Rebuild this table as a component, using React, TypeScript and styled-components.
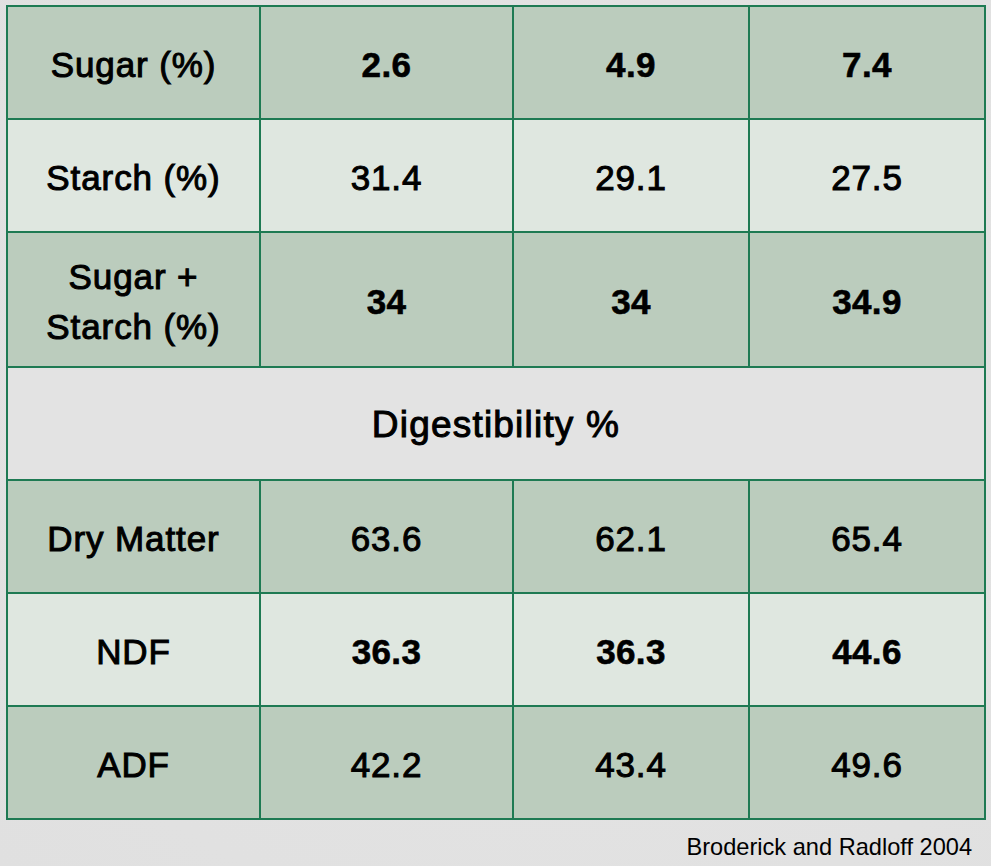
import React from 'react'
import styled, { createGlobalStyle } from 'styled-components'

const GlobalStyle = createGlobalStyle`
    html, body {
        margin: 0;
        padding: 0;
    }

    body {
        background: radial-gradient(ellipse at 55% 45%, #e6e6e6 0%, #e2e2e2 60%, #e0e0e0 100%);
        font-family: 'Liberation Sans', Arial, Helvetica, sans-serif;
        color: #000;
        width: 991px;
        height: 866px;
        overflow: hidden;
    }
`

const Page = styled.div`
    display: flex;
    flex-direction: column;
    padding: 5px 0 0 6px;
`

const Table = styled.div`
    display: grid;
    grid-template-columns: 251px 251px 234px 234px;
    grid-template-rows: 111px 111px 133px 111px 111px 111px 111px;
    gap: 2px;
    padding: 2px;
    width: fit-content;
    background-color: #1e7a53;
`

const Cell = styled.div<{ $shade: 'dark' | 'light'; $bold?: boolean }>`
    display: flex;
    align-items: center;
    justify-content: center;
    text-align: center;
    padding-top: 4px;
    box-sizing: border-box;

    background-color: ${(p) => (p.$shade === 'dark' ? '#bbccbd' : '#dfe7e0')};
    font-size: 35px;
    line-height: 50px;
    font-weight: ${(p) => (p.$bold ? 700 : 400)};
    letter-spacing: ${(p) => (p.$bold ? '0.4px' : '0.9px')};
    -webkit-text-stroke: ${(p) => (p.$bold ? '0.6px #000' : '1px #000')};
`

const SectionCell = styled.div`
    grid-column: 1 / -1;
    display: flex;
    align-items: center;
    justify-content: center;
    padding-top: 2px;

    background-color: #e3e3e3;
    font-size: 37px;
    font-weight: 400;
    letter-spacing: 1.2px;
    -webkit-text-stroke: 1px #000;
`

const Source = styled.div`
    align-self: flex-end;
    margin: 14px 19px 0 0;
    font-size: 23.6px;
`

type Row = {
    label: string
    values: string[]
    shade: 'dark' | 'light'
    bold?: boolean
}

const topRows: Row[] = [
    { label: 'Sugar (%)', values: ['2.6', '4.9', '7.4'], shade: 'dark', bold: true },
    { label: 'Starch (%)', values: ['31.4', '29.1', '27.5'], shade: 'light' },
    { label: 'Sugar +\nStarch (%)', values: ['34', '34', '34.9'], shade: 'dark', bold: true },
]

const digestRows: Row[] = [
    { label: 'Dry Matter', values: ['63.6', '62.1', '65.4'], shade: 'dark' },
    { label: 'NDF', values: ['36.3', '36.3', '44.6'], shade: 'light', bold: true },
    { label: 'ADF', values: ['42.2', '43.4', '49.6'], shade: 'dark' },
]

const renderRow = (row: Row) => (
    <React.Fragment key={row.label}>
        <Cell $shade={row.shade}>
            <span>
                {row.label.split('\n').map((line, i) => (
                    <React.Fragment key={i}>
                        {i > 0 && <br />}
                        {line}
                    </React.Fragment>
                ))}
            </span>
        </Cell>
        {row.values.map((v, i) => (
            <Cell key={i} $shade={row.shade} $bold={row.bold}>
                {v}
            </Cell>
        ))}
    </React.Fragment>
)

export default function App() {
    return (
        <>
            <GlobalStyle />
            <Page>
                <Table>
                    {topRows.map(renderRow)}
                    <SectionCell>Digestibility %</SectionCell>
                    {digestRows.map(renderRow)}
                </Table>
                <Source>Broderick and Radloff 2004</Source>
            </Page>
        </>
    )
}
